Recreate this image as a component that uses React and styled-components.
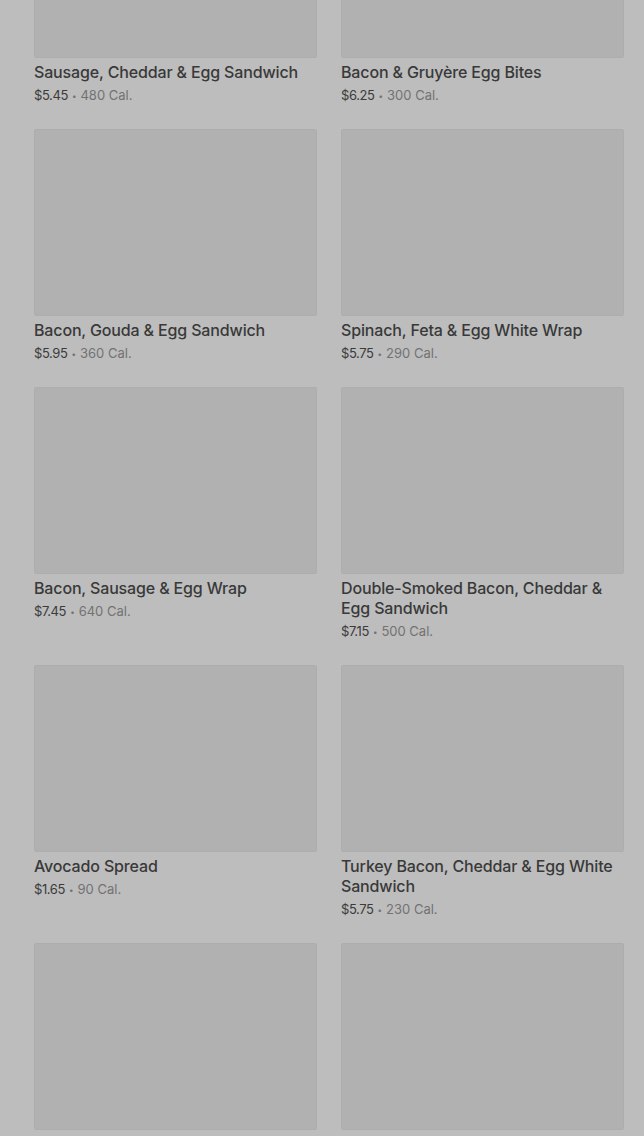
import React from "react";
import styled, { createGlobalStyle } from "styled-components";

const GlobalStyle = createGlobalStyle`
  html, body {
    margin: 0;
    padding: 0;
    background: #bdbdbd;
    overflow: hidden;
  }
  body {
    font-family: Inter, "Noto Sans", "Liberation Sans", sans-serif;
    -webkit-font-smoothing: antialiased;
  }
`;

const Page = styled.div`
  width: 644px;
  height: 1136px;
  overflow: hidden;
  background: #bdbdbd;
`;

const Grid = styled.div`
  display: grid;
  grid-template-columns: 283px 283px;
  column-gap: 24px;
  row-gap: 24px;
  padding: 0 20px 0 34px;
  margin-top: -129px;
`;

const Card = styled.div`
  display: flex;
  flex-direction: column;
`;

const Thumb = styled.div`
  height: 187px;
  background: #b1b1b1;
  border-radius: 2px;
  box-shadow: inset 0 0 0 1px rgba(0, 0, 0, 0.02);
`;

const Title = styled.div`
  margin-top: 4px;
  font-size: 16px;
  line-height: 20px;
  font-weight: 500;
  color: #393939;
  letter-spacing: -0.15px;
`;

const Meta = styled.div`
  margin-top: 4px;
  font-size: 13px;
  line-height: 18px;
  color: #727272;
`;

const Price = styled.span`
  color: #3b3b3b;
  letter-spacing: -0.4px;
`;

const Dot = styled.span`
  display: inline-block;
  margin: 0 4px;
  font-size: 8px;
  vertical-align: 1px;
`;

const items = [
  { name: "Sausage, Cheddar & Egg Sandwich", price: "$5.45", cal: "480" },
  { name: "Bacon & Gruyère Egg Bites", price: "$6.25", cal: "300" },
  { name: "Bacon, Gouda & Egg Sandwich", price: "$5.95", cal: "360" },
  { name: "Spinach, Feta & Egg White Wrap", price: "$5.75", cal: "290" },
  { name: "Bacon, Sausage & Egg Wrap", price: "$7.45", cal: "640" },
  {
    name: "Double-Smoked Bacon, Cheddar & Egg Sandwich",
    price: "$7.15",
    cal: "500"
  },
  { name: "Avocado Spread", price: "$1.65", cal: "90" },
  {
    name: "Turkey Bacon, Cheddar & Egg White Sandwich",
    price: "$5.75",
    cal: "230"
  },
  { id: "next-1" },
  { id: "next-2" }
];

const App = () => (
  <Page>
    <GlobalStyle />
    <Grid>
      {items.map(item => (
        <Card key={item.name || item.id}>
          <Thumb />
          {item.name && (
            <>
              <Title>{item.name}</Title>
              <Meta>
                <Price>{item.price}</Price>
                <Dot>•</Dot>
                {item.cal} Cal.
              </Meta>
            </>
          )}
        </Card>
      ))}
    </Grid>
  </Page>
);

export default App;
